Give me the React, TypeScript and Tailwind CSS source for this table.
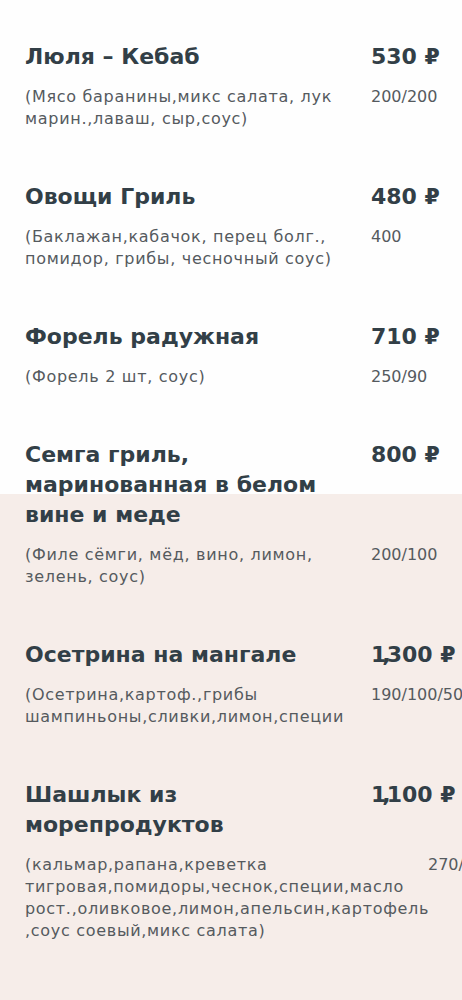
import React from "react";

interface MenuItem {
  title: string[];
  price: string;
  desc: string[];
  weight: string;
  descWidth?: string;
}

const items: MenuItem[] = [
  {
    title: ["Люля – Кебаб"],
    price: "530 ₽",
    desc: ["(Мясо баранины,микс салата, лук", "марин.,лаваш, сыр,соус)"],
    weight: "200/200",
  },
  {
    title: ["Овощи Гриль"],
    price: "480 ₽",
    desc: ["(Баклажан,кабачок, перец болг.,", "помидор, грибы, чесночный соус)"],
    weight: "400",
  },
  {
    title: ["Форель радужная"],
    price: "710 ₽",
    desc: ["(Форель 2 шт, соус)"],
    weight: "250/90",
  },
  {
    title: ["Семга гриль,", "маринованная в белом", "вине и меде"],
    price: "800 ₽",
    desc: ["(Филе сёмги, мёд, вино, лимон,", "зелень, соус)"],
    weight: "200/100",
  },
  {
    title: ["Осетрина на мангале"],
    price: "1,300 ₽",
    desc: ["(Осетрина,картоф.,грибы", "шампиньоны,сливки,лимон,специи"],
    weight: "190/100/50",
  },
  {
    title: ["Шашлык из", "морепродуктов"],
    price: "1,100 ₽",
    desc: [
      "(кальмар,рапана,креветка",
      "тигровая,помидоры,чеснок,специи,масло",
      "рост.,оливковое,лимон,апельсин,картофель",
      ",соус соевый,микс салата)",
    ],
    weight: "270/",
    descWidth: "w-[403px]",
  },
];

const Price: React.FC<{ value: string }> = ({ value }) => {
  const i = value.indexOf(",");
  if (i < 0) return <>{value}</>;
  return (
    <>
      <span className="tracking-[-4px]">{value.slice(0, i + 1)}</span>
      {value.slice(i + 1)}
    </>
  );
};

const MenuRow: React.FC<{ item: MenuItem }> = ({ item }) => (
  <div className="mb-[52px]">
    {/* Title + price */}
    <div className="flex">
      <div className="w-[346px] shrink-0 text-[22px] leading-[30px] font-bold text-[#323f47]">
        {item.title.map((t) => (
          <div key={t}>{t}</div>
        ))}
      </div>
      <div className="text-[22px] leading-[30px] font-bold text-[#323f47] whitespace-nowrap">
        <Price value={item.price} />
      </div>
    </div>

    {/* Description + weight */}
    <div className="flex mt-[14px]">
      <div
        className={`${item.descWidth ?? "w-[346px]"} shrink-0 text-[16px] leading-[22px] tracking-[0.7px] text-[#555a5e]`}
      >
        {item.desc.map((d) => (
          <div key={d} className="whitespace-nowrap">
            {d}
          </div>
        ))}
      </div>
      <div className="text-[16px] leading-[22px] text-[#555a5e] whitespace-nowrap">
        {item.weight}
      </div>
    </div>
  </div>
);

export default function App() {
  return (
    <div
      className="w-[462px] h-[1000px] overflow-hidden bg-[linear-gradient(to_bottom,#fefefe_494px,#f6ede9_494px)] px-[25px] pt-[42px]"
      style={{ fontFamily: '"DejaVu Sans", sans-serif' }}
    >
      {items.map((item) => (
        <MenuRow key={item.price} item={item} />
      ))}
    </div>
  );
}
